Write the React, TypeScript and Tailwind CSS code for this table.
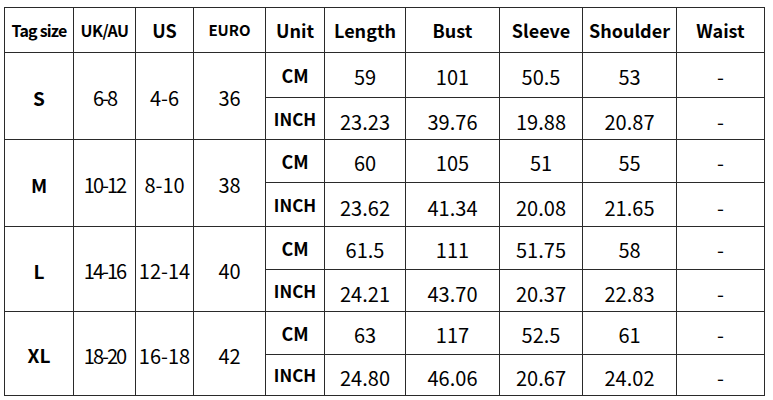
import React from "react";

const cols = [69, 62, 58, 72, 59, 81, 94, 83, 94, 88];

type Row = {
  size: string;
  uk: string;
  us: string;
  euro: string;
  cm: string[];
  inch: string[];
  h: [number, number];
};

const rows: Row[] = [
  { size: "S", uk: "6-8", us: "4-6", euro: "36", cm: ["59", "101", "50.5", "53", "-"], inch: ["23.23", "39.76", "19.88", "20.87", "-"], h: [45, 42] },
  { size: "M", uk: "10-12", us: "8-10", euro: "38", cm: ["60", "105", "51", "55", "-"], inch: ["23.62", "41.34", "20.08", "21.65", "-"], h: [43, 44] },
  { size: "L", uk: "14-16", us: "12-14", euro: "40", cm: ["61.5", "111", "51.75", "58", "-"], inch: ["24.21", "43.70", "20.37", "22.83", "-"], h: [43, 42] },
  { size: "XL", uk: "18-20", us: "16-18", euro: "42", cm: ["63", "117", "52.5", "61", "-"], inch: ["24.80", "46.06", "20.67", "24.02", "-"], h: [43, 41] },
];

const headers = ["Tag size", "UK/AU", "US", "EURO", "Unit", "Length", "Bust", "Sleeve", "Shoulder", "Waist"];

const cell = "border border-[#2a2a2a] text-center align-middle p-0";

export default function App() {
  return (
    <div
      className="w-[773px] h-[400px] bg-white pt-[7px] pl-[4px]"
      style={{ fontFamily: '"Noto Sans CJK SC", "Noto Sans", sans-serif' }}
    >
      <table className="table-fixed border-collapse border border-[#666] text-black">
        <colgroup>
          {cols.map((w, i) => (
            <col key={i} style={{ width: w }} />
          ))}
        </colgroup>
        <thead>
          <tr className="h-[45px]">
            {headers.map((h, i) => (
              <th
                key={h}
                className={`${cell} font-bold ${
                  i === 0
                    ? "text-[16px] tracking-[-0.05em]"
                    : i === 1
                    ? "text-[16px] tracking-[-0.03em]"
                    : i === 3
                    ? "text-[15px]"
                    : "text-[18px]"
                }`}
              >
                {h}
              </th>
            ))}
          </tr>
        </thead>
        <tbody>
          {rows.map((r) => (
            <React.Fragment key={r.size}>
              <tr style={{ height: r.h[0] }}>
                <td rowSpan={2} className={`${cell} font-bold text-[19px] pt-[4px]`}>
                  {r.size}
                </td>
                <td rowSpan={2} className={`${cell} text-[20px] tracking-[-0.1em] pt-[4px]`}>
                  {r.uk}
                </td>
                <td rowSpan={2} className={`${cell} text-[20px] pt-[4px]`}>
                  {r.us}
                </td>
                <td rowSpan={2} className={`${cell} text-[20px] pt-[4px]`}>
                  {r.euro}
                </td>
                <td className={`${cell} font-bold text-[18px]`}>CM</td>
                {r.cm.map((v, i) => (
                  <td key={i} className={`${cell} text-[20px] pt-[3px]`}>
                    {v}
                  </td>
                ))}
              </tr>
              <tr style={{ height: r.h[1] }}>
                <td className={`${cell} font-bold text-[17px]`}>INCH</td>
                {r.inch.map((v, i) => (
                  <td key={i} className={`${cell} text-[20px] pt-[6px]`}>
                    {v}
                  </td>
                ))}
              </tr>
            </React.Fragment>
          ))}
        </tbody>
      </table>
    </div>
  );
}
